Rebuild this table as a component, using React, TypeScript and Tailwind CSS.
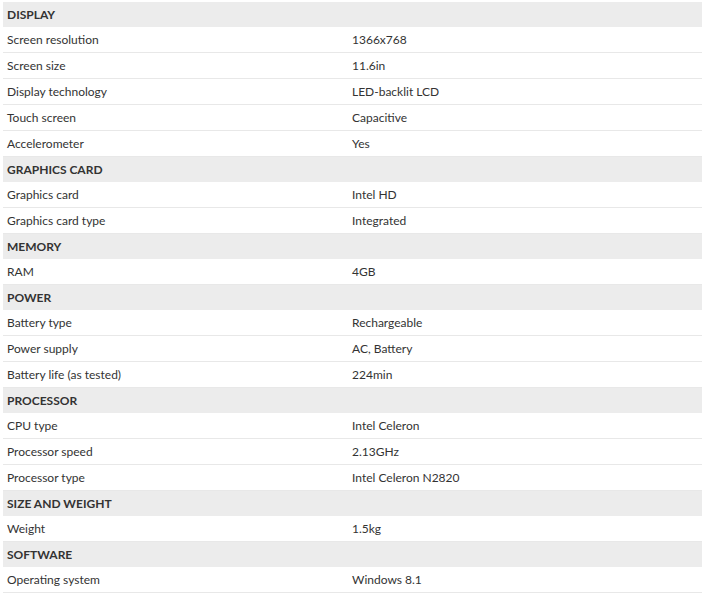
import React from "react";

type Section = { title: string; rows: [string, string][] };

const sections: Section[] = [
  {
    title: "DISPLAY",
    rows: [
      ["Screen resolution", "1366x768"],
      ["Screen size", "11.6in"],
      ["Display technology", "LED-backlit LCD"],
      ["Touch screen", "Capacitive"],
      ["Accelerometer", "Yes"],
    ],
  },
  {
    title: "GRAPHICS CARD",
    rows: [
      ["Graphics card", "Intel HD"],
      ["Graphics card type", "Integrated"],
    ],
  },
  { title: "MEMORY", rows: [["RAM", "4GB"]] },
  {
    title: "POWER",
    rows: [
      ["Battery type", "Rechargeable"],
      ["Power supply", "AC, Battery"],
      ["Battery life (as tested)", "224min"],
    ],
  },
  {
    title: "PROCESSOR",
    rows: [
      ["CPU type", "Intel Celeron"],
      ["Processor speed", "2.13GHz"],
      ["Processor type", "Intel Celeron N2820"],
    ],
  },
  { title: "SIZE AND WEIGHT", rows: [["Weight", "1.5kg"]] },
  { title: "SOFTWARE", rows: [["Operating system", "Windows 8.1"]] },
];

export default function App() {
  return (
    <div className="bg-white w-[705px] h-[596px] pt-[2px] pl-[3px] font-['Lato',sans-serif] text-[12px] text-[#333333]">
      <div className="w-[699px] flex flex-col">
        {sections.map((s) => (
          <React.Fragment key={s.title}>
            <div className="h-[25px] bg-[#ececec] flex items-center pl-[4px] font-bold text-[#333333]">
              {s.title}
            </div>
            {s.rows.map(([k, v]) => (
              <div
                key={k}
                className="h-[26px] border-b border-[#e8e8e8] flex items-center"
              >
                <div className="w-[345px] pl-[4px]">{k}</div>
                <div className="pl-[4px]">{v}</div>
              </div>
            ))}
          </React.Fragment>
        ))}
      </div>
    </div>
  );
}
